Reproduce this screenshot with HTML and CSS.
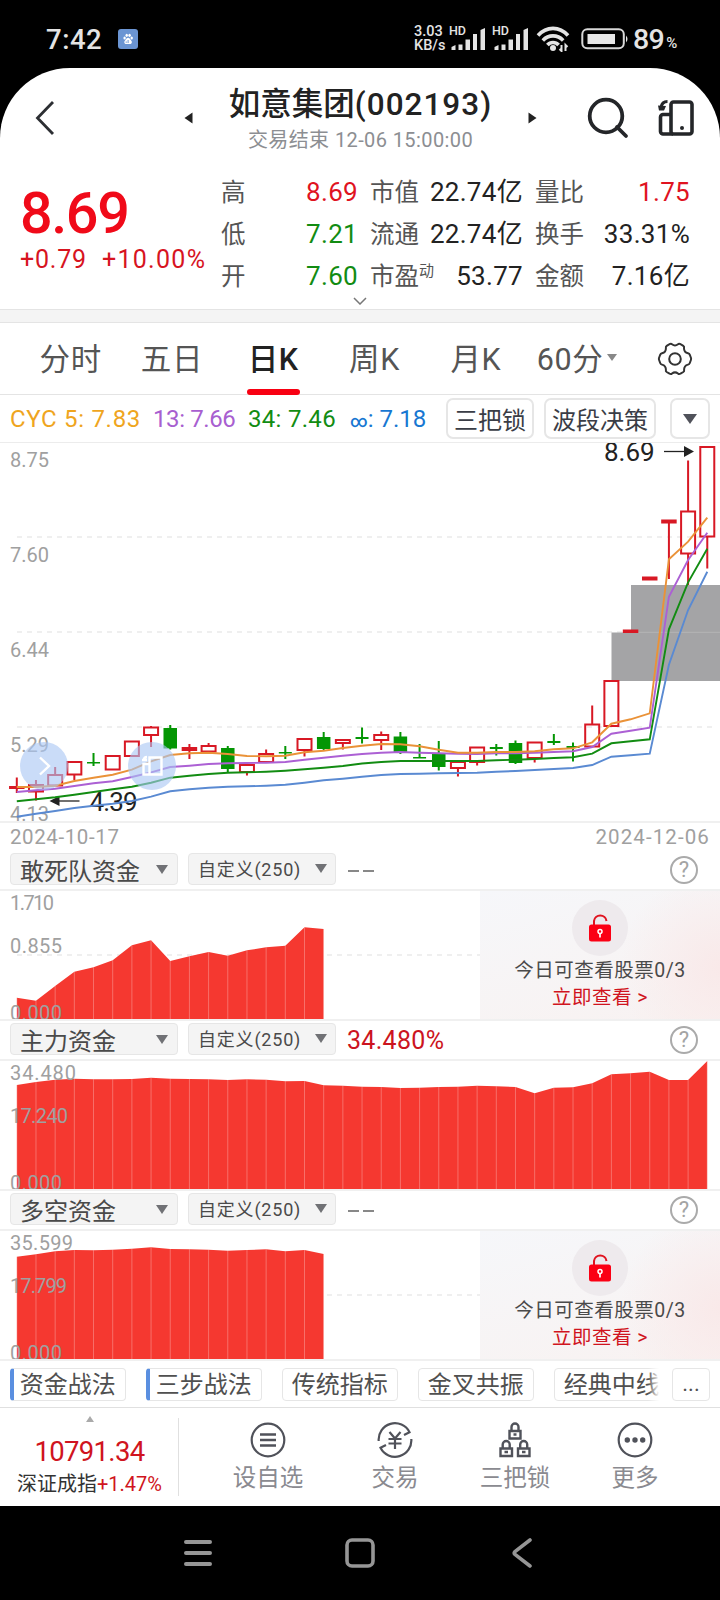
FILE: index.html
```html
<!DOCTYPE html>
<html lang="zh-CN">
<head>
    <meta charset="UTF-8">
    <meta name="viewport" content="width=device-width, initial-scale=1.0">
    <title>如意集团(002193)</title>
    <link rel="stylesheet" href="styles.css">
</head>
<body>

<div class="status-bar">
    <span class="clock">7:42</span>
    <svg class="paw" width="20" height="20" viewBox="0 0 20 20">
        <rect width="20" height="20" rx="3" fill="#6b95d3"/>
        <g fill="#fff">
            <ellipse cx="6.6" cy="9" rx="1.2" ry="1.6"/>
            <ellipse cx="8.7" cy="6.3" rx="1.2" ry="1.6"/>
            <ellipse cx="11.6" cy="6.3" rx="1.2" ry="1.6"/>
            <ellipse cx="13.7" cy="9" rx="1.2" ry="1.6"/>
            <path d="M10.1 8.8c1.6 0 2 1.7 3 2.6 1.400 1.300.8 3.600-1.200 3.600H8.300c-2 0-2.600-2.300-1.200-3.600 1-.9 1.400-2.600 3-2.600z"/>
        </g>
        <path d="M10.100 11v3M8.200 12.500v1.300" stroke="#6b95d3" fill="none"/>
    </svg>
    <span class="speed">3.03<br>KB/s</span>
    <div class="signal">
        <span class="hd">HD</span>
        <svg width="36" height="24" viewBox="0 0 36 24" fill="#e4e4e4">
            <path d="M1.500 23v-3l4-2v5zM8.500 17.500h4V23h-4zM15.500 12.500h4.500V23h-4.500zM23 7h4v16h-4zM30.500 3l4.500-2v22h-4.500z"/>
        </svg>
    </div>
    <div class="signal">
        <span class="hd">HD</span>
        <svg width="36" height="24" viewBox="0 0 36 24" fill="#e4e4e4">
            <path d="M1.500 23v-3l4-2v5zM8.500 17.500h4V23h-4zM15.500 12.500h4.500V23h-4.500zM23 7h4v16h-4zM30.500 3l4.500-2v22h-4.500z"/>
        </svg>
    </div>
    <svg class="wifi" width="34" height="26" viewBox="0 0 34 26" fill="none" stroke="#e4e4e4" stroke-width="3.600">
        <path d="M2 9.500C10.500 0 23.500 0 32 9.500M6.800 14.400c5.800-6 14.600-6 20.400 0M11.400 19c3-3.400 8.200-3.400 11.200 0"/>
        <circle cx="17" cy="22" r="3" fill="#e4e4e4" stroke="none"/>
        <path d="M25.500 19v6l-2-2M29.500 25v-6l2 2" stroke-width="2"/>
    </svg>
    <svg class="battery" width="48" height="22" viewBox="0 0 48 22">
        <rect x="1.300" y="1.300" width="41.500" height="19" rx="5" fill="none" stroke="#d8d8d8" stroke-width="2"/>
        <rect x="6.500" y="6" width="27.500" height="10" fill="#e8e8e8"/>
        <path d="M45 7.500q3 3.500 0 7z" fill="#e4e4e4"/>
    </svg>
    <span class="level">89</span><span class="percent">%</span>
</div>

<div class="app">
    <div class="header">
        <svg class="back" width="20" height="36" viewBox="0 0 20 36"><path d="M18 2L2.500 18 18 34" fill="none" stroke="#2d2f33" stroke-width="2.800"/></svg>
        <svg class="prev" width="9" height="12" viewBox="0 0 9 12"><path d="M8.500.5v11L.5 6z" fill="#222"/></svg>
        <div class="title">
            <h1>如意集团<span>(002193)</span></h1>
            <p>交易结束 12-06 15:00:00</p>
        </div>
        <svg class="next" width="9" height="12" viewBox="0 0 9 12"><path d="M.5.500v11l8-5.500z" fill="#222"/></svg>
        <svg class="search" width="42" height="42" viewBox="0 0 42 42" fill="none" stroke="#242629" stroke-width="3.800">
            <circle cx="19" cy="19" r="16.300"/><path d="M30 30l9 9" stroke-linecap="round"/>
        </svg>
        <svg class="rotate" width="38" height="38" viewBox="0 0 38 38" fill="none" stroke="#242629" stroke-width="3.600">
            <rect x="14" y="3" width="21" height="32" rx="2.500"/>
            <path d="M14 15.500H6.500A2.500 2.500 0 0 0 3.500 18v14.500A2.500 2.500 0 0 0 6.500 35H16"/>
            <path d="M10.500 2.500C6.500 2.500 4.500 5 4 8.500" stroke-width="3"/>
            <path d="M1 6.500l8 .5-2 4.500H2z" fill="#242629" stroke="none"/>
            <circle cx="25" cy="29" r="2" fill="#242629" stroke="none"/>
        </svg>
    </div>

    <div class="quote">
        <div class="price">
            <div class="last">8.69</div>
            <div class="change"><span>+0.79</span><span class="rate">+10.00%</span></div>
        </div>
        <div class="stats">
            <div class="stat"><label>高</label><b class="up">8.69</b></div>
            <div class="stat"><label>市值</label><b>22.74亿</b></div>
            <div class="stat"><label>量比</label><b class="up">1.75</b></div>
            <div class="stat"><label>低</label><b class="down">7.21</b></div>
            <div class="stat"><label>流通</label><b>22.74亿</b></div>
            <div class="stat"><label>换手</label><b>33.31%</b></div>
            <div class="stat"><label>开</label><b class="down">7.60</b></div>
            <div class="stat"><label>市盈<sup>动</sup></label><b>53.77</b></div>
            <div class="stat"><label>金额</label><b>7.16亿</b></div>
        </div>
        <svg class="expand" width="14" height="8" viewBox="0 0 14 8"><path d="M1 1l6 6 6-6" fill="none" stroke="#777" stroke-width="1.500"/></svg>
    </div>

    <div class="tabs">
        <div class="tab">分时</div>
        <div class="tab">五日</div>
        <div class="tab active">日K</div>
        <div class="tab">周K</div>
        <div class="tab">月K</div>
        <div class="tab">60分<i class="caret small"></i></div>
        <svg class="gear" width="36" height="36" viewBox="0 0 36 36" fill="none" stroke="#333" stroke-width="2">
            <path d="M12.500 3.200Q14 2.200 15 3.300Q18 5.600 21 3.300Q22 2.200 23.500 3.200L26.300 4.800Q27.500 5.600 27 7.200Q27 11.300 31 12.300Q32.300 12.600 32.900 14L34 17Q34.300 18 33.900 19L32.800 22Q32.300 23.300 31 23.600Q27 24.700 27.100 28.700Q27.500 30.200 26.300 31L23.500 32.700Q22 33.500 21 32.500Q18 30.200 15 32.500Q14 33.500 12.500 32.700L9.700 31Q8.500 30.200 8.900 28.700Q9 24.700 5 23.600Q3.700 23.300 3.200 22L2.100 19Q1.700 18 2 17L3.100 14Q3.700 12.600 5 12.300Q9 11.300 8.900 7.200Q8.500 5.600 9.700 4.800z"/>
            <circle cx="18" cy="18" r="5.800"/>
        </svg>
    </div>

    <div class="indicators">
        <span class="ma5">CYC 5: 7.83</span>
        <span class="ma13">13: 7.66</span>
        <span class="ma34">34: 7.46</span>
        <span class="mainf"><em>∞</em>: 7.18</span>
        <div class="buttons">
            <button>三把锁</button>
            <button class="wide">波段决策</button>
            <button class="more"><i class="caret"></i></button>
        </div>
    </div>

    <svg class="kline" id="kline" width="720" height="378" viewBox="0 443 720 378">
        <g stroke="#efefef" stroke-width="2" stroke-dasharray="5 5">
            <path d="M17 537H715M17 632H715M17 727H715"/>
        </g>
        <path d="M611.500 632.500H631V585h89v96H611.500z" fill="#a4a4a6"/>
        <path d="M631 632.300h89" stroke="#b4b4b6"/>
        <g class="axis">
            <text x="10" y="467">8.75</text>
            <text x="10" y="562">7.60</text>
            <text x="10" y="657">6.44</text>
            <text x="10" y="752">5.29</text>
            <text x="10" y="821">4.13</text>
        </g>
        <g id="candles"></g>
        <g class="mark">
            <text x="604" y="461">8.69</text>
            <path d="M664 451.500h22" stroke="#222" stroke-width="1.300"/>
            <path d="M684 446l10 5.500-10 5.500z"/>
            <text x="89.500" y="811" textLength="48">4.39</text>
            <path d="M58 801h21.500" stroke="#222" stroke-width="1.300"/>
            <path d="M59.500 796l-10 5 10 5z"/>
        </g>
        <g id="lines" fill="none" stroke-width="1.900"></g>
        <g fill="#a9c6f3" fill-opacity=".62">
            <circle cx="44" cy="766" r="24"/>
            <circle cx="152" cy="766" r="24"/>
        </g>
        <g fill="none" stroke="#fff" stroke-width="2.400">
            <path d="M40 757.500l9 8.500-9 8.500"/>
            <path d="M149.500 757.500h12v17h-12zM149.500 764h-6v10.500h6M142 760h5M144 760q0-3 3-3"/>
        </g>
    </svg>
    <div class="dates"><span>2024-10-17</span><span class="to">2024-12-06</span></div>

    <div class="selector">
        <div class="select name">敢死队资金<i class="caret"></i></div>
        <div class="select param">自定义(250)<i class="caret"></i></div>
        <span class="none"><i></i><i></i></span>
        <span class="help">?</span>
    </div>
    <div class="pane">
        <svg class="area" id="area1" width="720" height="128" viewBox="0 0 720 128">
            <path class="dash" d="M17 64H715"/>
            <g class="shape"></g>
            <g class="axis"><text x="10" y="19" textLength="44">1.710</text><text x="10" y="61.500" textLength="52">0.855</text><text x="10" y="128.500" textLength="52">0.000</text></g>
        </svg>
        <div class="locked">
            <div class="lock"><svg width="22" height="30" viewBox="0 0 22 30"><path d="M5 12V8a6.300 6.300 0 0 1 12.500 0" fill="none" stroke="#e0131f" stroke-width="2"/><rect y="11.500" width="22" height="17" rx="2.500" fill="#fb0014"/><path d="M11 19v5.500" stroke="#fff" stroke-width="1.700"/><circle cx="11" cy="18.500" r="2" fill="#fb0014" stroke="#fff" stroke-width="1.500"/></svg></div>
            <p>今日可查看股票0/3</p>
            <a>立即查看 &gt;</a>
        </div>
    </div>

    <div class="selector">
        <div class="select name">主力资金<i class="caret"></i></div>
        <div class="select param">自定义(250)<i class="caret"></i></div>
        <span class="value">34.480%</span>
        <span class="help">?</span>
    </div>
    <div class="pane">
        <svg class="area" id="area2" width="720" height="128" viewBox="0 0 720 128">
            <g class="shape"></g>
            <g class="axis"><text x="10" y="19" textLength="66">34.480</text><text x="10" y="61.500" textLength="58">17.240</text><text x="10" y="128.500" textLength="52">0.000</text></g>
        </svg>
    </div>

    <div class="selector">
        <div class="select name">多空资金<i class="caret"></i></div>
        <div class="select param">自定义(250)<i class="caret"></i></div>
        <span class="none"><i></i><i></i></span>
        <span class="help">?</span>
    </div>
    <div class="pane">
        <svg class="area" id="area3" width="720" height="128" viewBox="0 0 720 128">
            <path class="dash" d="M17 64H715"/>
            <g class="shape"></g>
            <g class="axis"><text x="10" y="19" textLength="63">35.599</text><text x="10" y="61.500" textLength="57">17.799</text><text x="10" y="128.500" textLength="52">0.000</text></g>
        </svg>
        <div class="locked">
            <div class="lock"><svg width="22" height="30" viewBox="0 0 22 30"><path d="M5 12V8a6.300 6.300 0 0 1 12.500 0" fill="none" stroke="#e0131f" stroke-width="2"/><rect y="11.500" width="22" height="17" rx="2.500" fill="#fb0014"/><path d="M11 19v5.500" stroke="#fff" stroke-width="1.700"/><circle cx="11" cy="18.500" r="2" fill="#fb0014" stroke="#fff" stroke-width="1.500"/></svg></div>
            <p>今日可查看股票0/3</p>
            <a>立即查看 &gt;</a>
        </div>
    </div>

    <div class="chips">
        <div class="chip-list">
            <div class="chip hot">资金战法</div>
            <div class="chip hot">三步战法</div>
            <div class="chip">传统指标</div>
            <div class="chip">金叉共振</div>
            <div class="chip">经典中线</div>
        </div>
        <div class="chip-more">...</div>
    </div>

    <div class="bottom">
        <div class="index">
            <svg width="8" height="6" viewBox="0 0 8 6"><path d="M4 0l4 6H0z" fill="#aaa"/></svg>
            <div class="points">10791.34</div>
            <div class="index-name">深证成指<span>+1.47%</span></div>
        </div>
        <div class="action first">
            <svg width="36" height="36" viewBox="0 0 36 36" fill="none" stroke="#50525a" stroke-width="2.200"><circle cx="18" cy="18" r="16.300"/><path d="M10 12.500h16M10 18h16M10 23.500h16" stroke-width="2.600"/></svg>
            <span>设自选</span>
        </div>
        <div class="action">
            <svg width="36" height="36" viewBox="0 0 36 36" fill="none" stroke="#50525a" stroke-width="2.200">
                <path d="M1.700 19A16.300 16.300 0 0 1 32.500 10.200L27 13M34.300 17A16.300 16.300 0 0 1 3.500 25.800L9 23"/>
                <path d="M12.500 10l5.500 6.500 5.500-6.500M18 16.500V27M11.500 17h13M11.500 21.500h13"/>
            </svg>
            <span>交易</span>
        </div>
        <div class="action">
            <svg width="36" height="36" viewBox="0 0 36 36" fill="none" stroke="#50525a" stroke-width="2.400">
                <path d="M12.500 9h11v7.500h-11zM14.500 9V5a3.500 3.500 0 0 1 7 0v4M16.500 12.500h3"/>
                <path d="M3.500 26.500h11.500V34H3.500zM5.700 26.500v-4a3.500 3.500 0 0 1 7 0v4M7.500 30h3.500"/>
                <path d="M21 26.500h11.500V34H21zM23.200 26.500v-4a3.500 3.500 0 0 1 7 0v4M25 30h3.500"/>
            </svg>
            <span>三把锁</span>
        </div>
        <div class="action">
            <svg width="36" height="36" viewBox="0 0 36 36" fill="none" stroke="#50525a" stroke-width="2.200"><circle cx="18" cy="18" r="16.300"/><g fill="#50525a" stroke="none"><circle cx="10.300" cy="18" r="2.700"/><circle cx="18" cy="18" r="2.700"/><circle cx="25.700" cy="18" r="2.700"/></g></svg>
            <span>更多</span>
        </div>
    </div>
</div>

<div class="nav-bar">
    <svg width="30" height="32" viewBox="0 0 30 32"><path d="M3 5h24M3 16h24M3 27h24" stroke="#969696" stroke-width="4" stroke-linecap="round"/></svg>
    <svg class="home" width="32" height="32" viewBox="0 0 32 32"><rect x="3" y="3" width="26" height="26" rx="5" fill="none" stroke="#969696" stroke-width="3.600"/></svg>
    <svg width="22" height="32" viewBox="0 0 22 32"><path d="M18 3L3 14.500q-1.500 1.500 0 3L18 29" fill="none" stroke="#969696" stroke-width="3.600" stroke-linecap="round"/></svg>
</div>

<script src="charts.js"></script>
</body>
</html>
```
FILE: styles.css
```css
* {
    box-sizing: border-box;
}
body {
    margin: 0;
    width: 720px;
    height: 1600px;
    background-color: #000;
    font-family: Roboto, "Noto Sans CJK SC", sans-serif;
    color: #222;
    overflow: hidden;
}
h1, p {
    margin: 0;
}
svg {
    display: block;
    flex-shrink: 0;
}
.caret {
    border-left: 6px solid transparent;
    border-right: 6px solid transparent;
    border-top: 9px solid #707175;
}
.caret.small {
    border-left-width: 5px;
    border-right-width: 5px;
    border-top: 7px solid #888;
    margin-left: 4px;
}

/* phone status bar */
.status-bar {
    display: flex;
    align-items: center;
    height: 68px;
    padding: 10px 40px 0 46px;
    color: #e4e4e4;
}
.clock {
    width: 72px;
    font-size: 27.5px;
    font-weight: 500;
    letter-spacing: 0.5px;
}
.speed {
    width: 35px;
    margin-left: 276px;
    font-size: 14.5px;
    line-height: 14px;
    font-weight: 500;
}
.signal {
    position: relative;
    width: 36px;
    margin-right: 7px;
}
.signal:first-of-type {
    margin-left: 1px;
}
.hd {
    position: absolute;
    left: -1px;
    top: -2px;
    font-size: 12.5px;
    line-height: 12px;
    font-weight: 500;
}
.battery {
    margin-left: 11px;
}
.level {
    margin-left: 4px;
    font-size: 28.5px;
    font-weight: 500;
    letter-spacing: -0.6px;
}
.percent {
    margin: 8px 0 0 2px;
    font-size: 15px;
    font-weight: 500;
}

.app {
    height: 1438px;
    background-color: #fff;
    border-radius: 70px 70px 0 0;
    overflow: hidden;
}

/* header */
.header {
    display: flex;
    align-items: center;
    height: 97px;
    padding: 3px 24px 0 35px;
}
.prev {
    margin-left: 129px;
}
.title {
    flex: 0 0 335px;
    text-align: center;
    white-space: nowrap;
}
.title h1 {
    font-size: 31.5px;
    line-height: 36px;
    font-weight: 500;
    margin-top: 3px;
}
.title h1 span {
    letter-spacing: 1px;
}
.title p {
    font-size: 20px;
    line-height: 24px;
    margin-top: 5px;
    letter-spacing: 0.4px;
    color: #8c8e92;
}
.search {
    margin-left: 50px;
}
.rotate {
    margin-left: 28px;
}

/* quote summary */
.quote {
    position: relative;
    display: flex;
    height: 157px;
    padding: 6px 30px 0 20px;
    border-bottom: 12px solid #f4f4f4;
    box-shadow: inset 0 -1px #e4e4e4;
}
.price {
    width: 201px;
    color: #d7141f;
}
.last {
    font-size: 57.5px;
    line-height: 60px;
    margin-top: 13px;
    font-weight: 500;
    letter-spacing: -1.4px;
    color: #f00a19;
}
.change {
    display: flex;
    gap: 15px;
    margin-top: 1px;
    font-size: 25px;
    line-height: 30px;
    letter-spacing: 0.8px;
}
.change .rate {
    letter-spacing: 1.3px;
}
.stats {
    display: grid;
    grid-template-columns: 137px 153px 155px;
    grid-auto-rows: 42px;
    column-gap: 12px;
}
.stat {
    display: flex;
    justify-content: space-between;
    align-items: center;
    white-space: nowrap;
    line-height: 42px;
}
.stat label {
    font-size: 24.5px;
    color: #555;
    padding-top: 2px;
}
.stat sup {
    font-size: 15px;
    line-height: 0;
}
.stat b {
    font-size: 26px;
    font-weight: 400;
    letter-spacing: 0.3px;
    color: #222;
}
.stat .up {
    color: #e0131f;
}
.stat .down {
    color: #128c12;
}
.expand {
    position: absolute;
    left: 353px;
    bottom: 5px;
}

/* period tabs */
.tabs {
    display: flex;
    align-items: center;
    height: 73px;
    padding-left: 20px;
    border-top: 1px solid #e4e4e4;
    border-bottom: 1px solid #e4e4e4;
}
.tab {
    position: relative;
    display: flex;
    align-items: center;
    justify-content: center;
    width: 101.3px;
    height: 72px;
    padding-bottom: 3px;
    font-size: 30.5px;
    letter-spacing: 0.6px;
    color: #555;
}
.tab.active {
    font-weight: 500;
    color: #222;
}
.tab.active::after {
    content: "";
    position: absolute;
    left: 24px;
    bottom: 0;
    width: 53px;
    height: 6px;
    border-radius: 3px;
    background-color: #f80012;
}
.gear {
    margin-left: 29px;
}

/* indicator values */
.indicators {
    display: flex;
    align-items: center;
    height: 48px;
    padding: 1px 10px 0;
    border-bottom: 1px solid #ececec;
    font-size: 24px;
    white-space: nowrap;
}
.indicators em {
    font-style: normal;
    font-size: 17px;
    font-weight: 500;
}
.ma5 {
    width: 143px;
    letter-spacing: 0.7px;
    color: #efa51e;
}
.ma13 {
    width: 95px;
    letter-spacing: -0.4px;
    color: #a85fd0;
}
.ma34 {
    width: 102px;
    letter-spacing: 0.3px;
    color: #128c12;
}
.mainf {
    color: #1877d2;
}
.buttons {
    display: flex;
    margin: -1px 0 0 auto;
}
.buttons button {
    display: flex;
    align-items: center;
    justify-content: center;
    width: 88px;
    height: 41px;
    padding: 0;
    border: 2px solid #e6e6e6;
    border-radius: 7px;
    background-color: #fff;
    font-family: inherit;
    font-size: 24px;
    color: #3a3d46;
}
.buttons .wide {
    width: 112px;
    margin: 0 14px 0 10px;
}
.buttons .more {
    width: 40px;
}
.buttons .caret {
    border-left-width: 7px;
    border-right-width: 7px;
    border-top: 10px solid #50525a;
}

/* charts */
.axis {
    font-size: 20px;
    fill: #a0a0a0;
}
.mark {
    font-size: 26px;
    fill: #222;
}
.dates {
    display: flex;
    justify-content: space-between;
    height: 30px;
    padding: 0 10px;
    border-top: 2px solid #f0f0f0;
    font-size: 20.5px;
    line-height: 28px;
    letter-spacing: 0.6px;
    color: #a0a0a0;
}
.dates .to {
    letter-spacing: 1.1px;
}
.selector {
    display: flex;
    align-items: center;
    height: 40px;
    padding: 0 22px 2px 10px;
    border-bottom: 2px solid #f0f0f0;
}
.select {
    display: flex;
    align-items: center;
    justify-content: space-between;
    height: 32px;
    padding: 0 8px 0 10px;
    border: 1px solid #e6e6e6;
    border-radius: 4px;
    background-color: #f4f4f4;
    color: #4a4a4a;
    white-space: nowrap;
}
.select.name {
    width: 168px;
    margin-right: 10px;
    padding: 0 9px;
    font-size: 24px;
}
.select.param {
    width: 148px;
    padding-bottom: 2px;
    padding-left: 9px;
    font-size: 18px;
    letter-spacing: 0.8px;
}
.none {
    display: flex;
    gap: 4px;
    margin: 3px 0 0 12px;
}
.none i {
    width: 11px;
    height: 2px;
    background-color: #888;
}
.value {
    margin: 2px 0 0 11px;
    font-size: 25px;
    letter-spacing: 0.3px;
    color: #cc1420;
}
.help {
    width: 28px;
    height: 28px;
    margin: 2px 0 0 auto;
    border: 2px solid #aaa;
    border-radius: 50%;
    text-align: center;
    font-size: 22px;
    line-height: 24px;
    color: #a4a4a4;
}
.pane {
    position: relative;
    height: 130px;
    border-bottom: 2px solid #f0f0f0;
}
.dash {
    stroke: #efefef;
    stroke-width: 2;
    stroke-dasharray: 5 5;
}
.locked {
    position: absolute;
    right: 0;
    top: 0;
    display: flex;
    flex-direction: column;
    align-items: center;
    width: 240px;
    height: 128px;
    padding-top: 9px;
    background: radial-gradient(ellipse 100px 100px at 100% 60%, #f9e9e9, transparent), linear-gradient(165deg, #f6f7fa, #f8f2f1);
    font-size: 19.5px;
    line-height: 27px;
    letter-spacing: 0.5px;
    color: #4a4a4a;
}
.lock {
    display: flex;
    align-items: center;
    justify-content: center;
    width: 56px;
    height: 56px;
    border-radius: 50%;
    background-color: #eeeaed;
}
.locked p {
    margin-top: 1px;
}
.locked a {
    color: #d01420;
}

/* strategy chips */
.chips {
    display: flex;
    align-items: center;
    justify-content: space-between;
    height: 47px;
    padding: 0 10px;
    border-bottom: 1px solid #e0e0e0;
}
.chip-list {
    position: relative;
    display: flex;
    gap: 20.5px;
    width: 652px;
    overflow: hidden;
}
.chip-list::after {
    content: "";
    position: absolute;
    right: 0;
    top: 0;
    width: 14px;
    height: 34px;
    background: linear-gradient(to right, rgba(255, 255, 255, 0), #fff 80%);
}
.chip {
    flex: 0 0 115.5px;
    height: 33px;
    border: 1px solid #e6e6e6;
    border-radius: 4px;
    text-align: center;
    font-size: 24px;
    line-height: 33px;
    color: #505050;
    white-space: nowrap;
}
.chip.hot {
    border-left: 4px solid #5a8fe0;
    padding-right: 3px;
}
.chip-more {
    width: 38px;
    height: 33px;
    border: 1px solid #e6e6e6;
    border-radius: 4px;
    text-align: center;
    font-size: 22px;
    line-height: 29px;
    color: #505050;
}

/* bottom actions */
.bottom {
    display: flex;
    height: 98px;
    padding-top: 8px;
}
.index {
    display: flex;
    flex-direction: column;
    align-items: center;
    width: 179px;
    height: 78px;
    margin-top: 2px;
    padding-left: 1px;
    border-right: 1px solid #e0e0e0;
    color: #d01420;
}
.index svg {
    margin-top: -2px;
}
.points {
    margin-top: 14px;
    font-size: 27.5px;
    line-height: 32px;
    letter-spacing: -0.7px;
}
.index-name {
    font-size: 20px;
    line-height: 28px;
    margin-top: 2px;
    color: #333;
}
.index-name span {
    color: #d01420;
}
.action {
    display: flex;
    flex-direction: column;
    align-items: center;
    width: 120px;
    padding-top: 6px;
    font-size: 23.5px;
    line-height: 32px;
    color: #8a8a90;
}
.action.first {
    margin: 0 7px 0 29px;
}
.action span {
    margin-top: 4px;
}

/* system navigation */
.nav-bar {
    display: flex;
    justify-content: space-between;
    height: 94px;
    padding: 31px 186px 0 183px;
}
.home {
    margin-right: 5px;
}
```
FILE: charts.js
```js
// x position of each trading day
const x = i => 16.8 + 19.18 * i;

// [type, body top, body bottom, wick top, wick bottom]
// r = hollow red, g = solid green, R / G = flat bar
const candles = [
    ['R', 786, 789, 777.5, 793], ['r', 785, 791.5, 780, 800.5], ['r', 775, 785.5, 767, 785],
    ['r', 762, 774.5, 761, 780], ['G', 762, 763.5, 753, 766], ['r', 756, 769.5, 756, 769],
    ['r', 741.5, 756, 742, 756], ['r', 727.5, 735, 726, 747], ['g', 728, 748.5, 725, 749.5],
    ['R', 747, 751, 744, 759], ['r', 746, 751.5, 743, 751], ['g', 748, 769, 746, 772],
    ['r', 765, 772, 765, 775.5], ['r', 754, 762, 749.5, 762], ['G', 752, 753.5, 746, 759],
    ['r', 739, 750, 739, 756.5], ['g', 737, 749, 732, 750], ['r', 740, 743, 739.5, 749.5],
    ['G', 737, 739, 727.5, 743.5], ['r', 735, 740, 731.5, 750], ['g', 736.5, 752, 732, 754],
    ['G', 757, 758.5, 744, 758], ['g', 754, 767, 741, 770.5], ['r', 762, 768, 762, 776.5],
    ['r', 747.5, 762, 748, 765.5], ['G', 747, 749, 744, 755.5], ['g', 743, 763, 740.5, 764],
    ['r', 742.5, 758, 743, 762.5], ['G', 741, 743, 734, 745], ['G', 746, 748, 742.5, 761.5],
    ['r', 724.5, 746.5, 705.5, 746], ['r', 681, 726, 681, 726], ['R', 629.5, 633, 630, 633],
    ['R', 576.5, 580.5, 577, 580], ['R', 519.5, 523.5, 520, 579], ['r', 511.5, 553.5, 460.5, 585],
    ['r', 447, 536.5, 447, 568.5]
];

const lines = {
    '#5a8ad2': [816.7, 813.7, 811, 808, 805.7, 803.7, 801, 796.7, 791.3, 789.3, 787.7, 786.7, 786.3, 785.7, 784.7, 782.7, 780.3, 778.7, 776.7, 775, 774, 773.7, 773.3, 773, 772.7, 771.7, 771, 770, 769, 768, 765, 756.7, 755.3, 753.7, 664.7, 610, 571.7],
    '#128c12': [801.3, 799.3, 797.3, 794.7, 792, 789.3, 786.7, 782.7, 777.7, 775.7, 774, 772.7, 772.3, 771.7, 770.7, 769.3, 767.7, 766, 763.5, 762, 761, 761, 761, 761, 761, 760.3, 759.7, 759, 758, 757.3, 753.7, 743.3, 741.3, 739.3, 629.3, 582.3, 548.7],
    '#ac60d4': [792, 790.3, 788.7, 786, 783.3, 781.3, 777, 772.3, 767, 765.7, 764, 763.3, 763, 762.7, 762, 759.7, 757.7, 755.7, 754, 752.7, 752, 752.7, 753.3, 753.7, 754, 753.3, 753.3, 752.7, 752, 751.3, 747, 733.7, 730.7, 727.7, 596.7, 560, 532.7],
    '#ea9238': [787, 787, 785.7, 781, 777.7, 774.7, 769.7, 761.3, 755, 753.3, 752.7, 754, 756, 756.3, 755.7, 752.3, 750.7, 748, 745.7, 744, 744.3, 746.3, 749.7, 752.7, 752.7, 752, 752, 751.3, 749.3, 748.3, 742.3, 723.7, 719.3, 713.3, 559.3, 541.7, 517.7]
};

const areas = {
    area1: [106.7, 109.7, 95, 80.7, 76.3, 69.3, 54.3, 49.3, 70, 65.3, 61, 64.7, 59.3, 56.3, 54.7, 36.3, 38],
    area2: [24, 21, 18.7, 17.7, 18.3, 18.3, 18, 16.7, 17.7, 18, 18.3, 19, 18.3, 18.7, 20.3, 20, 24.3, 24.7, 25.7, 26, 27, 26.7, 26, 25.7, 24.7, 25.3, 26, 32.3, 26.7, 26.3, 22.3, 13.3, 12.3, 10.7, 19, 19, 0],
    area3: [25.7, 23.3, 20.3, 19, 19.3, 18.7, 17.7, 16.3, 18, 18.3, 18.7, 19.7, 19, 18.3, 20.3, 19, 23]
};

document.getElementById('candles').innerHTML = candles.map(([type, top, bottom, high, low], i) => {
    const cx = x(i);
    const red = type.toLowerCase() === 'r';
    const color = red ? '#d81824' : '#049604';
    if (type === 'r') {
        return `<path d="M${cx} ${high}V${top}M${cx} ${bottom}V${low}M${cx - 7} ${top}h14V${bottom}h-14z" fill="none" stroke="${color}" stroke-width="2"/>`;
    }
    const w = type === 'g' ? 13.5 : (red ? 15.5 : 13);
    return `<path d="M${cx} ${high}V${low}" stroke="${color}" stroke-width="2"/>` +
        `<rect x="${cx - w / 2}" y="${top}" width="${w}" height="${bottom - top}" fill="${color}"/>`;
}).join('');

document.getElementById('lines').innerHTML = Object.entries(lines).map(([color, ys]) =>
    `<polyline stroke="${color}" points="${ys.map((y, i) => x(i) + ',' + y).join(' ')}"/>`
).join('');

for (const [id, ys] of Object.entries(areas)) {
    const points = ys.map((y, i) => x(i) + ',' + y).join(' ');
    const bars = ys.map((y, i) => `M${x(i)} ${y}V128`).join('');
    document.querySelector('#' + id + ' .shape').innerHTML =
        `<polygon fill="#f53830" points="${x(0)},128 ${points} ${x(ys.length - 1)},128"/>` +
        `<path d="${bars}" stroke="#fff" stroke-opacity=".28"/>`;
}
```
